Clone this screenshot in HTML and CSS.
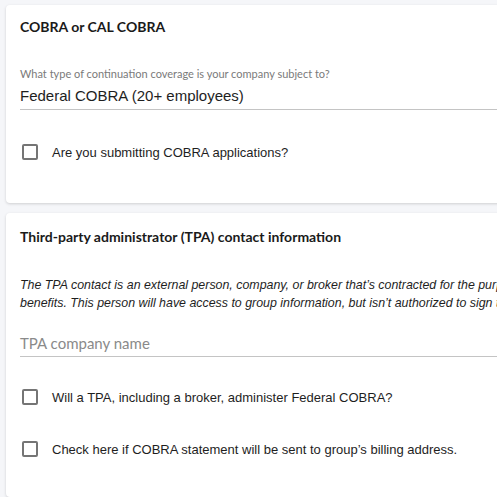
FILE: index.html
```html
<!DOCTYPE html>
<html>
<head>
<meta charset="utf-8">
<link rel="stylesheet" href="styles.css">
</head>
<body>
<div class="page">
  <section class="card card-cobra">
    <h2 class="card-title">COBRA or CAL COBRA</h2>
    <div class="field field-select">
      <div class="field-label">What type of continuation coverage is your company subject to?</div>
      <div class="field-value">Federal COBRA (20+ employees)</div>
    </div>
    <label class="check-row check-first">
      <span class="checkbox"></span>
      <span class="check-text">Are you submitting COBRA applications?</span>
    </label>
  </section>
  <section class="card card-tpa">
    <h2 class="card-title">Third-party administrator (TPA) contact information</h2>
    <p class="note">The TPA contact is an external person, company, or broker that’s contracted for the purpose of administering benefits. This person will have access to group information, but isn’t authorized to sign the group application.</p>
    <div class="field field-text">
      <div class="field-placeholder">TPA company name</div>
    </div>
    <label class="check-row check-tpa">
      <span class="checkbox"></span>
      <span class="check-text">Will a TPA, including a broker, administer Federal COBRA?</span>
    </label>
    <label class="check-row check-billing">
      <span class="checkbox"></span>
      <span class="check-text">Check here if COBRA statement will be sent to group’s billing address.</span>
    </label>
  </section>
</div>
</body>
</html>
```
FILE: styles.css
```css
html, body {
  margin: 0;
  padding: 0;
  background: #f5f6f9;
  overflow: hidden;
  width: 497px;
  height: 497px;
}
.page {
  padding: 5px 0 0 6px;
  width: 860px;
  display: flex;
  flex-direction: column;
  gap: 10px;
}
.card {
  background: #fff;
  border-radius: 4px;
  box-shadow: 0 1px 3px rgba(0, 0, 0, 0.16);
  padding: 0 14px;
  display: flex;
  flex-direction: column;
}
.card-cobra {
  height: 198px;
  box-sizing: border-box;
  padding-top: 12px;
}
.card-tpa {
  padding-top: 14px;
  padding-bottom: 40px;
}
.card-title {
  margin: 0;
  font-family: "Lato", "Open Sans", sans-serif;
  font-weight: 700;
  font-size: 14px;
  line-height: 20px;
  color: #1a1a1a;
}
.field {
  border-bottom: 1px solid #c4c4c4;
}
.field-select {
  margin-top: 30px;
  padding-bottom: 3px;
}
.field-label {
  font-family: "Lato", sans-serif;
  font-size: 11px;
  line-height: 14px;
  color: #7a7a7a;
}
.field-value {
  margin-top: 5px;
  font-family: "Liberation Sans", Arial, sans-serif;
  font-size: 15px;
  line-height: 20px;
  color: #1e1e1e;
}
.check-row {
  display: flex;
  align-items: center;
  gap: 14px;
  padding-left: 2px;
  height: 16px;
}
.check-first { margin-top: 34px; }
.check-tpa { margin-top: 32px; }
.check-billing { margin-top: 36px; }
.checkbox {
  width: 16px;
  height: 16px;
  box-sizing: border-box;
  border: 2px solid #757575;
  border-radius: 2px;
  flex: none;
}
.check-text {
  font-family: "Liberation Sans", Arial, sans-serif;
  font-size: 13px;
  color: #1e1e1e;
  white-space: nowrap;
}
.note {
  margin: 29px 0 0;
  width: 615px;
  font-family: "Liberation Sans", Arial, sans-serif;
  font-style: italic;
  font-size: 12.4px;
  line-height: 18px;
  color: #1e1e1e;
}
.field-text {
  margin-top: 21px;
  padding-bottom: 3px;
}
.field-placeholder {
  font-family: "Lato", sans-serif;
  font-size: 15px;
  line-height: 20px;
  color: #8a8a8a;
}
```
